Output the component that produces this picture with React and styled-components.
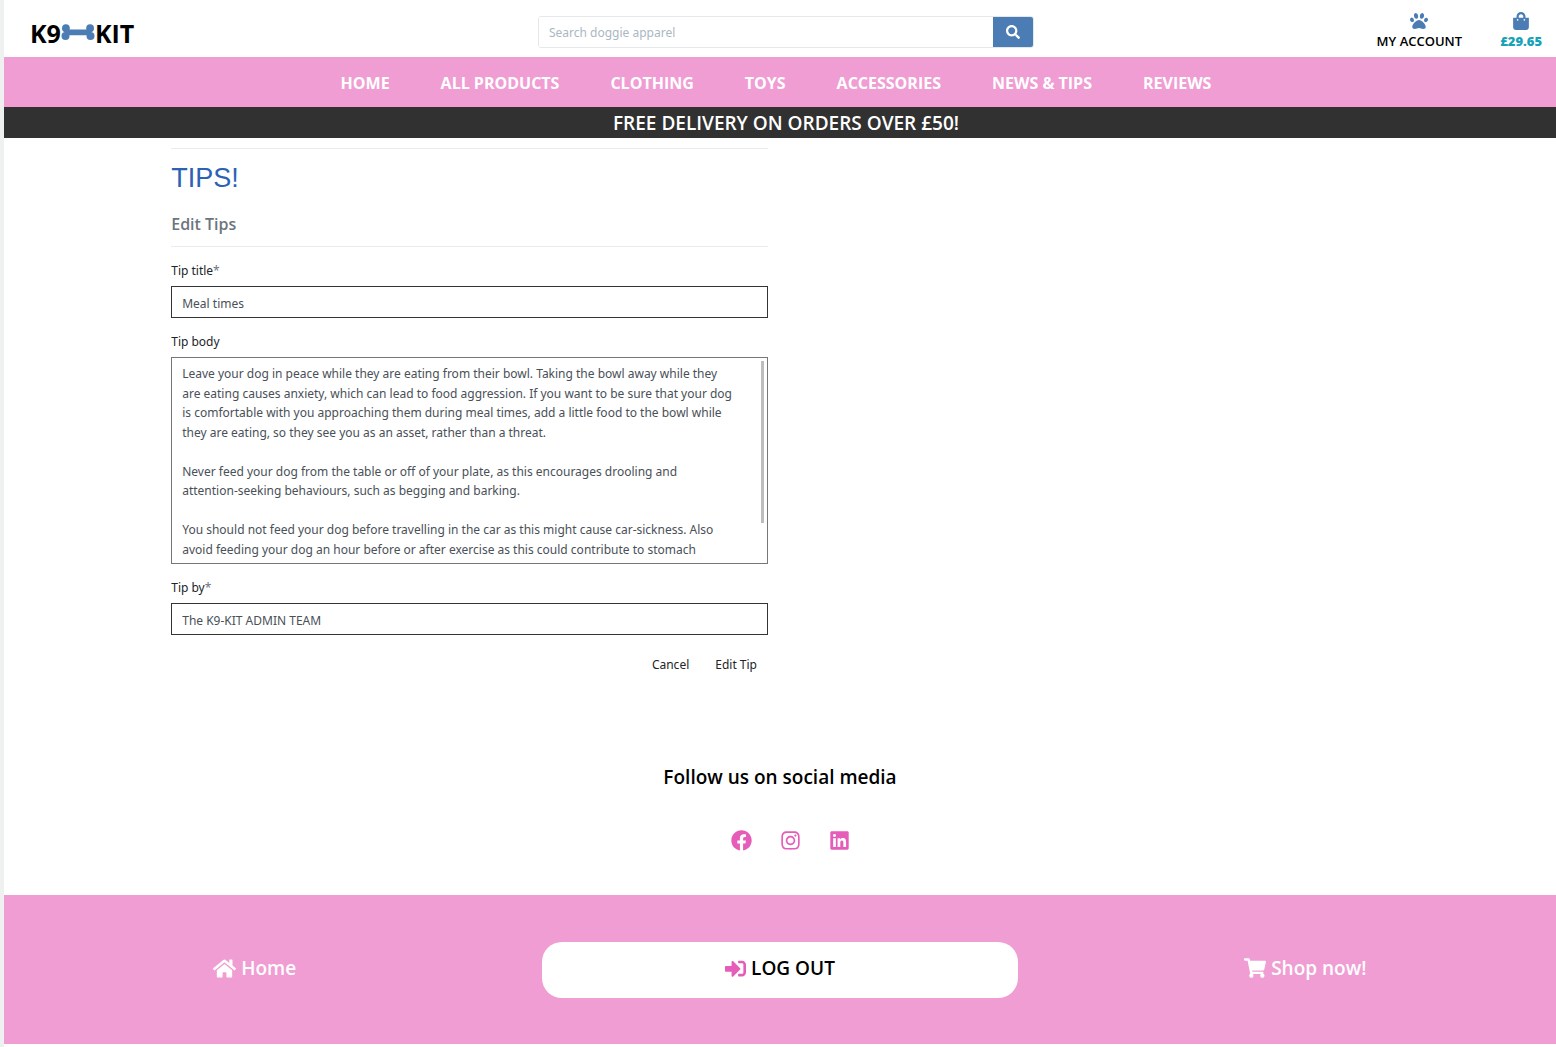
import React from "react";
import styled, { createGlobalStyle } from "styled-components";
import {
  FaPaw,
  FaShoppingBag,
  FaSearch,
  FaFacebook,
  FaInstagram,
  FaLinkedin,
  FaHome,
  FaSignInAlt,
  FaShoppingCart,
} from "react-icons/fa";

const GlobalStyle = createGlobalStyle`
  *, *::before, *::after { box-sizing: border-box; }
  body {
    margin: 0;
    background: #fff;
    color: #000;
    font-family: "Noto Sans", "Open Sans", sans-serif;
    font-size: 12px;
    line-height: 20px;
  }
  a { color: inherit; text-decoration: none; }
  svg { display: block; flex: none; }
`;

const displayFont = `"Open Sans", "Noto Sans", sans-serif`;

const Page = styled.div`
  border-left: 4px solid #eff1f0;
  min-height: 100vh;
`;

const Header = styled.header`
  display: grid;
  grid-template-columns: repeat(3, 1fr);
  align-items: center;
  height: 57px;
  padding: 0 14px 0 26px;
`;

const Logo = styled.a`
  display: flex;
  align-items: center;
  justify-self: start;
  padding-top: 8px;
  font-family: ${displayFont};
  font-size: 25px;
  line-height: 32px;
  font-weight: 700;
`;

const Search = styled.form`
  display: flex;
  height: 32px;
  margin: 6px 4px 0;
  border: 1px solid #e4e8ea;
  border-radius: 3px;
  overflow: hidden;
`;

const SearchInput = styled.input`
  flex: 1;
  min-width: 0;
  padding: 2px 10px 0;
  border: 0;
  font: inherit;
  outline: 0;
  &::placeholder { color: #a9b8c3; opacity: 1; }
`;

const SearchButton = styled.button`
  display: flex;
  align-items: center;
  justify-content: center;
  width: 40px;
  padding: 0;
  border: 0;
  background: #4b7db4;
  color: #fff;
  font-size: 14px;
`;

const Tools = styled.div`
  display: flex;
  justify-content: flex-end;
  gap: 38px;
  padding-top: 7px;
`;

const Tool = styled.a`
  display: flex;
  flex-direction: column;
  align-items: center;
  font-family: ${displayFont};
  font-size: 13px;
  line-height: 22px;
  font-weight: ${(p) => (p.$accent ? 800 : 600)};
  color: ${(p) => (p.$accent ? "#17a2b8" : "#000")};
  svg { color: #4b7db4; font-size: 18px; }
`;

const Nav = styled.nav`
  display: flex;
  justify-content: center;
  gap: 51px;
  padding: 16px 8px 14px 0;
  background: #f09dd3;
  color: #fff;
  font-family: ${displayFont};
  font-size: 16px;
  font-weight: 700;
`;

const Banner = styled.div`
  padding: 1px 0 0 12px;
  background: #313131;
  color: #fff;
  font-family: ${displayFont};
  font-size: 19px;
  line-height: 30px;
  font-weight: 600;
  text-align: center;
`;

const Main = styled.main`
  width: 80%;
  margin: 0 auto;
`;

const Column = styled.div`
  width: 50%;
  padding: 10px 12px 0;
`;

const Rule = styled.hr`
  margin: 0;
  border: 0;
  border-top: 1px solid #ebebeb;
`;

const Title = styled.h1`
  margin: 12px 0 0;
  color: #2b62b3;
  font-family: "Liberation Sans", sans-serif;
  font-size: 27px;
  line-height: 34px;
  font-weight: 400;
`;

const Subtitle = styled.h2`
  margin: 19px 0 11px;
  color: #6c757d;
  font-family: ${displayFont};
  font-size: 16px;
  line-height: 21px;
  font-weight: 600;
`;

const Form = styled.form`
  display: flex;
  flex-direction: column;
  gap: 14px;
  padding-top: 14px;
`;

const Field = styled.div`
  display: flex;
  flex-direction: column;
  gap: 5px;
`;

const Label = styled.label`
  color: #212529;
`;

const Required = styled.span`
  color: #6c757d;
`;

const TextInput = styled.input`
  width: 100%;
  height: 32px;
  padding: 2px 10px 0;
  border: 1px solid #343434;
  border-radius: 0;
  color: #495057;
  font: inherit;
  outline: 0;
`;

const TextAreaFrame = styled.div`
  position: relative;
  padding-bottom: 5px;
  border: 1px solid #777;
`;

const TextArea = styled.textarea`
  display: block;
  width: 100%;
  height: 200px;
  padding: 6px 33px 0 10px;
  border: 0;
  border-radius: 0;
  color: #495057;
  font: inherit;
  line-height: 1.625;
  outline: 0;
  resize: none;
  scrollbar-width: none;
`;

const ScrollThumb = styled.span`
  position: absolute;
  top: 3px;
  right: 3px;
  width: 3px;
  height: 79%;
  background: #bdbdbd;
`;

const Actions = styled.div`
  display: flex;
  justify-content: flex-end;
  gap: 4px;
  padding-top: 1px;
`;

const ActionButton = styled.button`
  padding: 5px 11px;
  border: 0;
  background: transparent;
  color: #212529;
  font: inherit;
`;

const Social = styled.section`
  padding: 82px 0 44px;
  text-align: center;
`;

const SocialTitle = styled.h3`
  margin: 0;
  font-family: ${displayFont};
  font-size: 19px;
  line-height: 30px;
  font-weight: 600;
`;

const SocialLinks = styled.div`
  display: flex;
  justify-content: center;
  gap: 28px;
  padding: 38px 0 0 20px;
  color: #e65cb9;
`;

const Footer = styled.footer`
  padding: 47px 0 46px;
  background: #f09dd3;
  overflow: hidden;
`;

const FooterRow = styled.div`
  display: grid;
  grid-template-columns: repeat(3, 1fr);
  align-items: center;
  margin: 0 -12px;
`;

const FooterLink = styled.a`
  display: flex;
  align-items: center;
  justify-content: center;
  gap: 5px;
  margin: 0 25px;
  padding: 11px 0 15px;
  border-radius: 20px;
  background: ${(p) => (p.$filled ? "#fff" : "transparent")};
  color: ${(p) => (p.$filled ? "#000" : "#fff")};
  font-family: ${displayFont};
  font-size: 19px;
  line-height: 30px;
  font-weight: 600;
  svg { color: ${(p) => (p.$filled ? "#e65cb9" : "#fff")}; }
`;

const navItems = [
  "HOME",
  "ALL PRODUCTS",
  "CLOTHING",
  "TOYS",
  "ACCESSORIES",
  "NEWS & TIPS",
  "REVIEWS",
];

const tipBody = `Leave your dog in peace while they are eating from their bowl. Taking the bowl away while they are eating causes anxiety, which can lead to food aggression. If you want to be sure that your dog is comfortable with you approaching them during meal times, add a little food to the bowl while they are eating, so they see you as an asset, rather than a threat.

Never feed your dog from the table or off of your plate, as this encourages drooling and attention-seeking behaviours, such as begging and barking.

You should not feed your dog before travelling in the car as this might cause car-sickness. Also avoid feeding your dog an hour before or after exercise as this could contribute to stomach`;

function Bone() {
  return (
    <svg width="34" height="18" viewBox="0 0 34 18" fill="#4b7db4" aria-hidden="true">
      <circle cx="4.9" cy="4.2" r="3.9" />
      <circle cx="4.5" cy="12" r="4" />
      <circle cx="29.1" cy="4.2" r="3.9" />
      <circle cx="29.5" cy="12" r="4" />
      <path d="M3 6L8 5.4H26L31 6L30 8.2L31 11L26 11.2H8L3 11L4 8.2Z" />
    </svg>
  );
}

export default function App() {
  return (
    <>
      <GlobalStyle />
      <Page>
        <Header>
          <Logo href="#">
            <span>K9</span>
            <Bone />
            <span>KIT</span>
          </Logo>
          <Search>
            <SearchInput aria-label="Search" placeholder="Search doggie apparel" />
            <SearchButton type="button" aria-label="Search">
              <FaSearch />
            </SearchButton>
          </Search>
          <Tools>
            <Tool href="#">
              <FaPaw />
              MY ACCOUNT
            </Tool>
            <Tool href="#" $accent>
              <FaShoppingBag />
              £29.65
            </Tool>
          </Tools>
        </Header>
        <Nav>
          {navItems.map((item) => (
            <a key={item} href="#">
              {item}
            </a>
          ))}
        </Nav>
        <Banner>FREE DELIVERY ON ORDERS OVER £50!</Banner>
        <Main>
          <Column>
            <Rule />
            <Title>TIPS!</Title>
            <Subtitle>Edit Tips</Subtitle>
            <Rule />
            <Form>
              <Field>
                <Label htmlFor="tip-title">
                  Tip title<Required>*</Required>
                </Label>
                <TextInput id="tip-title" defaultValue="Meal times" />
              </Field>
              <Field>
                <Label htmlFor="tip-body">Tip body</Label>
                <TextAreaFrame>
                  <TextArea id="tip-body" defaultValue={tipBody} />
                  <ScrollThumb />
                </TextAreaFrame>
              </Field>
              <Field>
                <Label htmlFor="tip-by">
                  Tip by<Required>*</Required>
                </Label>
                <TextInput id="tip-by" defaultValue="The K9-KIT ADMIN TEAM" />
              </Field>
              <Actions>
                <ActionButton type="button">Cancel</ActionButton>
                <ActionButton type="button">Edit Tip</ActionButton>
              </Actions>
            </Form>
          </Column>
        </Main>
        <Social>
          <SocialTitle>Follow us on social media</SocialTitle>
          <SocialLinks>
            <a href="#" aria-label="Facebook">
              <FaFacebook size={21} />
            </a>
            <a href="#" aria-label="Instagram">
              <FaInstagram size={21} />
            </a>
            <a href="#" aria-label="LinkedIn">
              <FaLinkedin size={21} />
            </a>
          </SocialLinks>
        </Social>
        <Footer>
          <FooterRow>
            <FooterLink href="#">
              <FaHome size={23} />
              Home
            </FooterLink>
            <FooterLink href="#" $filled>
              <FaSignInAlt size={21} />
              LOG OUT
            </FooterLink>
            <FooterLink href="#">
              <FaShoppingCart size={22} />
              Shop now!
            </FooterLink>
          </FooterRow>
        </Footer>
      </Page>
    </>
  );
}
